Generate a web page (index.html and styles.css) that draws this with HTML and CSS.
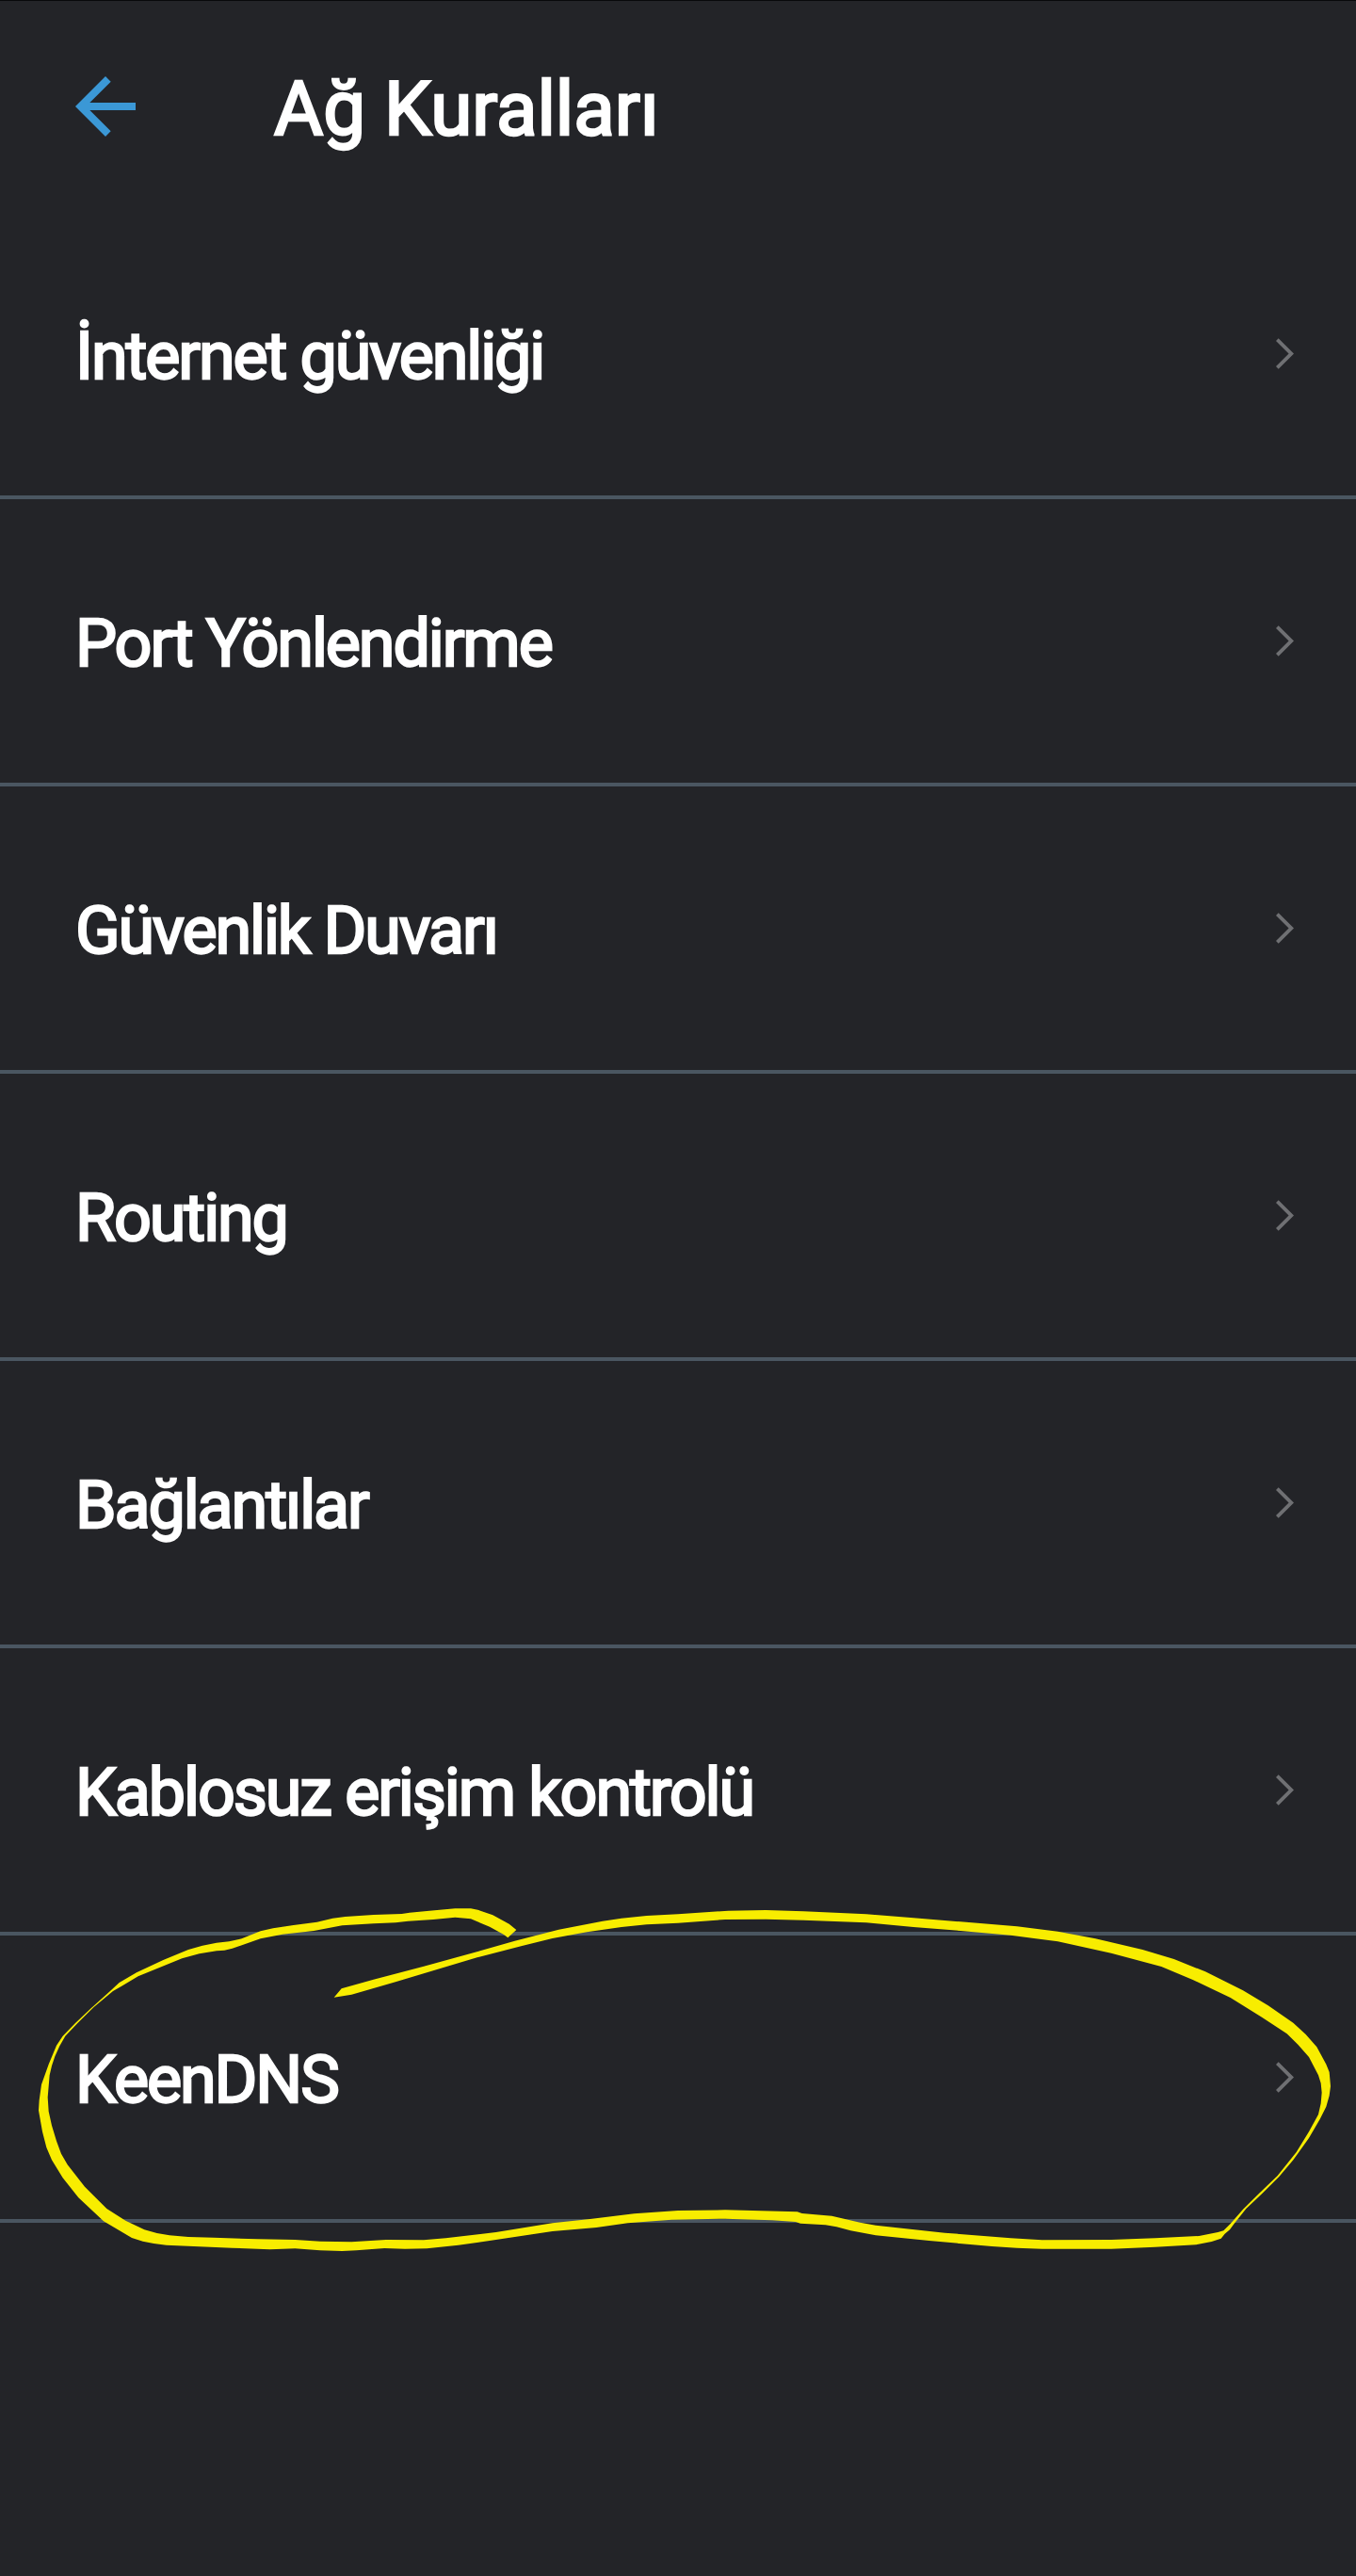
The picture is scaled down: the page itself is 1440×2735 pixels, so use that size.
FILE: index.html
```html
<!DOCTYPE html>
<html lang="tr">
<head>
<meta charset="utf-8">
<title>Ağ Kuralları</title>
<link rel="stylesheet" href="styles.css">
</head>
<body>
<svg class="defs" width="0" height="0" aria-hidden="true">
  <symbol id="chevron" viewBox="0 0 19 33"><path d="M2.7 .2 19 16.5 2.7 32.8 0 30.1 13.6 16.5 0 2.9z"/></symbol>
</svg>
<main class="screen">
  <header class="header">
    <svg class="back" viewBox="4 4 16 16"><path d="M20 11H7.83l5.59-5.59L12 4l-8 8 8 8 1.41-1.41L7.83 13H20z"/></svg>
    <h1 class="title">Ağ Kuralları</h1>
  </header>
  <nav class="list">
    <a class="row"><span class="label">İnternet güvenliği</span><svg class="chevron"><use href="#chevron"/></svg></a>
    <a class="row"><span class="label">Port Yönlendirme</span><svg class="chevron"><use href="#chevron"/></svg></a>
    <a class="row"><span class="label">Güvenlik Duvarı</span><svg class="chevron"><use href="#chevron"/></svg></a>
    <a class="row"><span class="label">Routing</span><svg class="chevron"><use href="#chevron"/></svg></a>
    <a class="row"><span class="label">Bağlantılar</span><svg class="chevron"><use href="#chevron"/></svg></a>
    <a class="row"><span class="label">Kablosuz erişim kontrolü</span><svg class="chevron"><use href="#chevron"/></svg></a>
    <a class="row marked"><span class="label">KeenDNS</span><svg class="chevron"><use href="#chevron"/></svg>
      <svg class="scribble" viewBox="0 0 4320 1260"><path d="M1618 172L1645 147 1622 128 1570 100 1522 83 1500 79 1450 79 1360 87 1305 92 1280 96 1190 99 1100 105 1060 110 1010 122 935 132 870 142 830 151 770 175 730 184 690 188 645 197 600 210 520 243 435 283 380 315 350 343 290 397 240 444 200 485 180 515 155 575 132 640 125 690 123 722 135 790 148 840 165 880 200 937 250 1000 330 1075 420 1128 455 1139 490 1146 530 1151 600 1154 740 1160 860 1165 940 1162 1020 1168 1090 1170 1135 1168 1225 1161 1290 1163 1360 1162 1460 1151 1560 1137 1660 1122 1760 1107 1900 1095 2000 1081 2140 1070 2310 1067 2460 1072 2535 1077 2550 1082 2630 1087 2665 1093 2710 1105 2790 1120 2960 1137 3160 1155 3240 1160 3320 1163 3540 1163 3680 1157 3810 1150 3860 1140 3890 1130 3902 1115 3918 1102 3930 1085 3970 1035 4020 988 4075 933 4120 880 4170 810 4205 750 4225 710 4235 675 4239 645 4235 600 4225 575 4195 520 4160 480 4120 443 4040 388 3960 340 3840 280 3740 240 3640 210 3490 175 3370 152 3240 136 3060 121 2910 109 2760 97 2560 88 2440 84 2320 86 2160 97 2060 102 1980 110 1920 119 1780 146 1640 182 1500 222 1350 263 1190 305 1088 334 1064 362 1120 353 1260 313 1410 268 1520 235 1660 199 1760 174 1870 154 1980 138 2060 130 2160 125 2310 114 2440 113 2560 116 2760 124 2910 138 3060 150 3220 164 3300 175 3370 184 3540 221 3700 264 3800 306 3920 363 4020 425 4100 478 4135 512 4170 552 4200 610 4208 635 4211 665 4208 700 4200 735 4170 790 4130 855 4070 930 4010 988 3960 1037 3920 1083 3898 1105 3880 1110 3820 1122 3680 1129 3540 1134 3320 1135 3220 1129 3010 1112 2790 1088 2740 1079 2650 1058 2615 1055 2555 1050 2540 1045 2310 1039 2160 1041 2020 1051 1880 1068 1760 1081 1580 1110 1420 1129 1350 1135 1230 1134 1120 1141 1020 1139 940 1134 820 1132 680 1127 600 1125 540 1120 500 1113 460 1102 400 1073 340 1035 270 965 215 895 195 860 180 820 165 770 155 725 152 680 158 610 165 580 175 550 190 517 208 485 248 443 298 394 360 342 390 325 440 295 580 238 635 223 690 214 715 212 740 206 830 175 900 161 1000 150 1090 133 1190 127 1260 124 1300 119 1380 114 1450 107 1500 112 1560 137 1605 162z"/></svg>
    </a>
  </nav>
</main>
</body>
</html>
```
FILE: styles.css
```css
body {
  margin: 0;
  background: #232428;
  color: #fff;
  font-family: Roboto, "Noto Sans", sans-serif;
}

.defs {
  display: block;
}

.screen {
  box-sizing: border-box;
  min-height: 2735px;
  border-top: 1px solid #08090b;
}

.header {
  box-sizing: border-box;
  display: flex;
  align-items: flex-start;
  gap: 147px;
  height: 224px;
  padding: 0 80px;
}

.back {
  width: 64px;
  height: 64px;
  margin-top: 80px;
  fill: #3b98d6;
}

.title {
  margin: 66px 0 0;
  font-size: 80px;
  font-weight: 400;
  line-height: 98px;
  -webkit-text-stroke: 2.6px #fff;
}

.list {
  display: flex;
  flex-direction: column;
}

.row {
  position: relative;
  box-sizing: border-box;
  display: flex;
  align-items: center;
  justify-content: space-between;
  height: 305px;
  padding: 0 66px 0 80px;
  border-bottom: 4px solid #4a5661;
}

.label {
  padding-top: 5px;
  font-size: 70px;
  font-weight: 400;
  line-height: 86px;
  letter-spacing: -0.03em;
  -webkit-text-stroke: 2.3px #fff;
}

.chevron {
  width: 19px;
  height: 33px;
  fill: #6f7073;
}

/* Hand-drawn highlight over the marked row */
.scribble {
  position: absolute;
  top: -55px;
  left: 0;
  z-index: 1;
  width: 1440px;
  height: 420px;
  fill: #f8ed00;
}
```
